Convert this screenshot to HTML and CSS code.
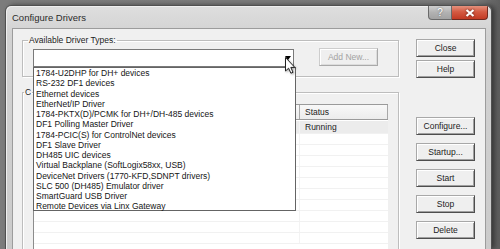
FILE: index.html
```html
<!DOCTYPE html>
<html lang="en">
<head>
    <meta charset="UTF-8">
    <title>Configure Drivers</title>
    <link rel="stylesheet" href="styles.css">
</head>
<body>
    <div class="window">
        <div class="titlebar">
            <span class="title">Configure Drivers</span>
            <div class="caption">
                <span class="cap cap-help">?</span>
                <span class="cap cap-close">
                    <svg viewBox="0 0 10 8" width="10" height="8">
                        <path d="M1.5 1 L8.5 7 M8.5 1 L1.5 7" stroke="#fff" stroke-width="2.2" />
                    </svg>
                </span>
            </div>
        </div>

        <div class="client">
            <div class="left">
                <!-- Available driver types -->
                <fieldset class="group group-available">
                    <legend>Available Driver Types:</legend>
                    <div class="driver-row">
                        <div class="combo">
                            <span class="combo-arrow"></span>
                            <ul class="droplist">
                                <li>1784-U2DHP for DH+ devices</li>
                                <li>RS-232 DF1 devices</li>
                                <li>Ethernet devices</li>
                                <li>EtherNet/IP Driver</li>
                                <li>1784-PKTX(D)/PCMK for DH+/DH-485 devices</li>
                                <li>DF1 Polling Master Driver</li>
                                <li>1784-PCIC(S) for ControlNet devices</li>
                                <li>DF1 Slave Driver</li>
                                <li>DH485 UIC devices</li>
                                <li>Virtual Backplane (SoftLogix58xx, USB)</li>
                                <li>DeviceNet Drivers (1770-KFD,SDNPT drivers)</li>
                                <li>SLC 500 (DH485) Emulator driver</li>
                                <li>SmartGuard USB Driver</li>
                                <li>Remote Devices via Linx Gateway</li>
                            </ul>
                            <svg class="cursor" viewBox="0 0 11 17" width="11" height="17">
                                <path d="M0.5 0.5 V14 L3.6 11.2 L5.9 16.2 L8 15.3 L5.8 10.4 H9.8 Z" fill="#fff" stroke="#222" stroke-width="1" />
                            </svg>
                        </div>
                        <button class="btn btn-add" disabled>Add New...</button>
                    </div>
                </fieldset>

                <!-- Configured drivers -->
                <fieldset class="group group-configured">
                    <legend>C</legend>
                    <div class="listview">
                        <div class="lv-head">
                            <span class="col-name"></span>
                            <span class="col-status">Status</span>
                        </div>
                        <div class="lv-row lv-row-first">
                            <span class="col-name"></span>
                            <span class="col-status">Running</span>
                        </div>
                        <div class="lv-row"><span class="col-name"></span><span class="col-status"></span></div>
                        <div class="lv-row"><span class="col-name"></span><span class="col-status"></span></div>
                        <div class="lv-row"><span class="col-name"></span><span class="col-status"></span></div>
                        <div class="lv-row"><span class="col-name"></span><span class="col-status"></span></div>
                        <div class="lv-row"><span class="col-name"></span><span class="col-status"></span></div>
                        <div class="lv-row"><span class="col-name"></span><span class="col-status"></span></div>
                        <div class="lv-row"><span class="col-name"></span><span class="col-status"></span></div>
                        <div class="lv-row"><span class="col-name"></span><span class="col-status"></span></div>
                        <div class="lv-row"><span class="col-name"></span><span class="col-status"></span></div>
                        <div class="lv-row"><span class="col-name"></span><span class="col-status"></span></div>
                    </div>
                </fieldset>
            </div>

            <div class="buttons">
                <button class="btn">Close</button>
                <button class="btn btn-help">Help</button>
                <button class="btn btn-configure">Configure...</button>
                <button class="btn">Startup...</button>
                <button class="btn">Start</button>
                <button class="btn">Stop</button>
                <button class="btn">Delete</button>
            </div>
        </div>
    </div>
</body>
</html>
```

FILE: styles.css
```css
body {
    margin: 0;
    width: 500px;
    height: 249px;
    overflow: hidden;
    background: linear-gradient(90deg, #7c7c7c 0%, #7a7a7a 95%, #5e5e5e 100%);
    font-family: "Liberation Sans", Arial, sans-serif;
    font-size: 8.5px;
    color: #1c1c1c;
}

.window {
    margin: 5px 0 0 5px;
    width: 487px;
    height: 244px;
    box-sizing: border-box;
    border: 1px solid #505050;
    border-bottom: none;
    border-radius: 6px 6px 0 0;
    background: linear-gradient(180deg, #dedede 0%, #d2d2d2 12%, #cbcbcb 100%);
    box-shadow: 3px 0 5px rgba(0, 0, 0, 0.45), inset 1px 1px 0 #efefef;
    display: flex;
    flex-direction: column;
    overflow: hidden;
}

/* Title bar */
.titlebar {
    height: 22px;
    flex-shrink: 0;
    display: flex;
    align-items: center;
    padding-left: 6px;
}

.title {
    flex: 1;
    font-size: 9.5px;
    color: #2a2a2a;
}

.caption {
    align-self: flex-start;
    display: flex;
    margin-right: 3px;
}

.cap {
    height: 14px;
    box-sizing: border-box;
    display: flex;
    justify-content: center;
    align-items: center;
    color: #fff;
    border: 1px solid #6a6a6a;
    border-top: none;
}

.cap-help {
    width: 24px;
    border-radius: 0 0 0 4px;
    background: linear-gradient(180deg, #cfcfcf 0%, #b2b2b2 50%, #a2a2a2 100%);
    font-size: 10px;
    text-shadow: 0 0 2px #555;
}

.cap-close {
    width: 36px;
    border-color: #70291f;
    border-left: none;
    border-radius: 0 0 4px 0;
    background: linear-gradient(180deg, #e4917d 0%, #d45a42 45%, #c23a24 100%);
}

.cap-close svg {
    filter: drop-shadow(0 0 1px #5a1a10);
}

/* Client area */
.client {
    flex: 1;
    min-height: 0;
    margin: 0 5px 0 6px;
    border: 1px solid #9c9c9c;
    border-bottom: none;
    background: #f0f0f0;
    display: flex;
    overflow: hidden;
}

.left {
    padding-left: 9px;
}

.group {
    width: 377px;
    box-sizing: border-box;
    margin: 0;
    border: 1px solid #bdbdbd;
    box-shadow: 1px 1px 0 #fff, inset 1px 1px 0 #fff;
    padding: 4px 0 9px 10px;
}

.group legend {
    margin-left: -5px;
    padding: 0 1px;
    line-height: 10px;
}

.group-available {
    margin-top: 6px;
}

.group-configured {
    margin-top: 10px;
    padding-top: 7px;
}

.group-configured legend {
    margin-left: -9px;
}

.driver-row {
    display: flex;
    align-items: flex-start;
    gap: 25px;
}

.combo {
    position: relative;
    width: 261px;
    height: 18px;
    box-sizing: border-box;
    border: 1px solid #7a7a7a;
    background: #fff;
    display: flex;
    align-items: center;
    justify-content: flex-end;
    padding-right: 2px;
}

.combo-arrow {
    width: 0;
    height: 0;
    border-left: 3.5px solid transparent;
    border-right: 3.5px solid transparent;
    border-top: 4px solid #000;
    margin-top: -1px;
}

.droplist {
    position: absolute;
    top: 17px;
    left: -1px;
    z-index: 2;
    width: 263px;
    height: 144px;
    box-sizing: border-box;
    margin: 0;
    padding: 0 0 0 2px;
    list-style: none;
    background: #fff;
    border: 1px solid #646464;
    color: #151515;
}

.droplist li {
    line-height: 10.25px;
    white-space: nowrap;
}

.cursor {
    position: absolute;
    left: 251px;
    top: 7px;
    z-index: 3;
    filter: drop-shadow(1px 1px 1px rgba(0, 0, 0, 0.35));
}

/* Buttons */
.btn {
    display: block;
    width: 59px;
    height: 18px;
    padding: 0;
    font-family: inherit;
    font-size: 8.5px;
    color: #1c1c1c;
    background: #efefef;
    border: 1px solid;
    border-color: #a8a8a8 #4e4e4e #4e4e4e #a8a8a8;
    box-shadow: inset 1px 1px 0 #fff, inset -1px -1px 0 #a0a0a0;
}

.btn-add {
    margin-top: -1px;
    color: #a2a2a2;
    border-color: #cdcdcd #a9a9a9 #a9a9a9 #cdcdcd;
    box-shadow: inset 1px 1px 0 #fff, inset -1px -1px 0 #dcdcdc;
}

.buttons {
    margin-left: 17px;
    padding-top: 10px;
    display: flex;
    flex-direction: column;
    gap: 8px;
}

.buttons .btn-help {
    margin-top: -5px;
}

.buttons .btn-configure {
    margin-top: 31px;
}

/* List view */
.listview {
    width: 354px;
    height: 150px;
    background: #fff;
    border-left: 1px solid #8c8c8c;
}

.lv-head,
.lv-row {
    display: flex;
}

.lv-head {
    height: 16px;
    box-sizing: border-box;
    background: linear-gradient(180deg, #f8f8f8 0%, #ececec 100%);
    border-top: 1px solid #9a9a9a;
    border-bottom: 1px solid #9a9a9a;
}

.lv-head span {
    line-height: 14px;
    padding-left: 5px;
    box-sizing: border-box;
    border-right: 1px solid #a8a8a8;
}

.col-name {
    width: 266px;
}

.col-status {
    width: 88px;
}

.lv-row {
    height: 11px;
    box-sizing: border-box;
    border-bottom: 1px solid #f1f1f1;
}

.lv-row span {
    padding-left: 5px;
    box-sizing: border-box;
    line-height: 11px;
}

.lv-row .col-name {
    border-right: 1px solid #f3f3f3;
}

.lv-row-first {
    height: 13px;
    margin-top: 1px;
    background: #ececec;
}

.lv-row-first span {
    line-height: 13px;
}
```
